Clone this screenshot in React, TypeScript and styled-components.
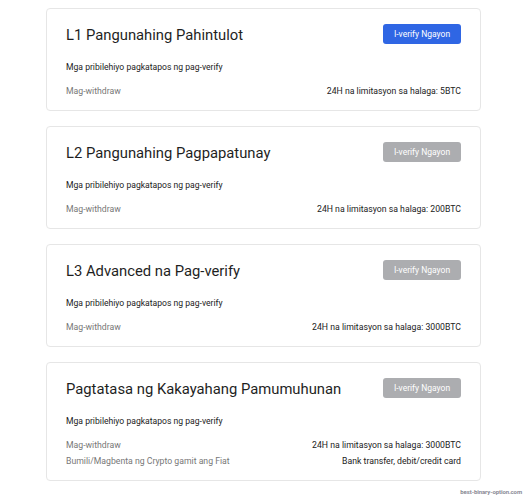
import React from "react";
import styled, { createGlobalStyle } from "styled-components";

const GlobalStyle = createGlobalStyle`
  html, body {
    margin: 0;
    padding: 0;
    background: #ffffff;
  }
  body {
    font-family: Roboto, "Liberation Sans", Arial, sans-serif;
    color: #222;
  }
`;

interface LevelType {
  title: string;
  active: boolean;
  rows: { label: string; value: string }[];
}

const levels: LevelType[] = [
  {
    title: "L1 Pangunahing Pahintulot",
    active: true,
    rows: [{ label: "Mag-withdraw", value: "24H na limitasyon sa halaga: 5BTC" }],
  },
  {
    title: "L2 Pangunahing Pagpapatunay",
    active: false,
    rows: [{ label: "Mag-withdraw", value: "24H na limitasyon sa halaga: 200BTC" }],
  },
  {
    title: "L3 Advanced na Pag-verify",
    active: false,
    rows: [{ label: "Mag-withdraw", value: "24H na limitasyon sa halaga: 3000BTC" }],
  },
  {
    title: "Pagtatasa ng Kakayahang Pamumuhunan",
    active: false,
    rows: [
      { label: "Mag-withdraw", value: "24H na limitasyon sa halaga: 3000BTC" },
      { label: "Bumili/Magbenta ng Crypto gamit ang Fiat", value: "Bank transfer, debit/credit card" },
    ],
  },
];

const App = () => {
  return (
    <>
      <GlobalStyle />
      <Page>
        <List>
          {levels.map((level) => (
            <Card key={level.title}>
              <Header>
                <Title>{level.title}</Title>
                <VerifyButton className={level.active ? "on" : "off"}>I-verify Ngayon</VerifyButton>
              </Header>
              <Privileges>Mga pribilehiyo pagkatapos ng pag-verify</Privileges>
              <Rows>
                {level.rows.map((row) => (
                  <Row key={row.label}>
                    <Label>{row.label}</Label>
                    <Value>{row.value}</Value>
                  </Row>
                ))}
              </Rows>
            </Card>
          ))}
        </List>
        <Watermark>best-binary-option.com</Watermark>
      </Page>
    </>
  );
};

export default App;

const Page = styled.div`
  width: 530px;
  height: 500px;
  position: relative;
  padding: 8px 0 0 46px;
  box-sizing: border-box;
`;

const List = styled.div`
  width: 435px;
  display: flex;
  flex-direction: column;
  gap: 15px;
`;

const Card = styled.div`
  border: 1px solid #e6e6e6;
  border-radius: 4px;
  padding: 15px 19px 11px 19px;
  background: #fff;
`;

const Header = styled.div`
  display: flex;
  align-items: center;
  justify-content: space-between;
  height: 20px;
`;

const Title = styled.div`
  font-size: 14.8px;
  line-height: 20px;
  color: #1f1f1f;
  margin-top: 2px;
`;

const VerifyButton = styled.button`
  width: 78px;
  height: 20px;
  border: none;
  border-radius: 3px;
  font-family: Roboto, "Liberation Sans", Arial, sans-serif;
  font-size: 8.5px;
  color: #fff;
  padding: 0;
  background-color: #acadb0;

  &.on {
    background-color: #2f66e4;
  }
`;

const Privileges = styled.div`
  margin-top: 16px;
  font-size: 8.6px;
  line-height: 14px;
  color: #222;
`;

const Rows = styled.div`
  margin-top: 9px;
  display: flex;
  flex-direction: column;
`;

const Row = styled.div`
  display: flex;
  justify-content: space-between;
  align-items: center;
  height: 16px;
  font-size: 8.7px;
`;

const Label = styled.span`
  color: #777;
`;

const Value = styled.span`
  color: #222;
`;

const Watermark = styled.div`
  position: absolute;
  right: 8px;
  top: 488px;
  font-size: 6px;
  font-weight: bold;
  color: #8a8a95;
  letter-spacing: -0.1px;
`;
